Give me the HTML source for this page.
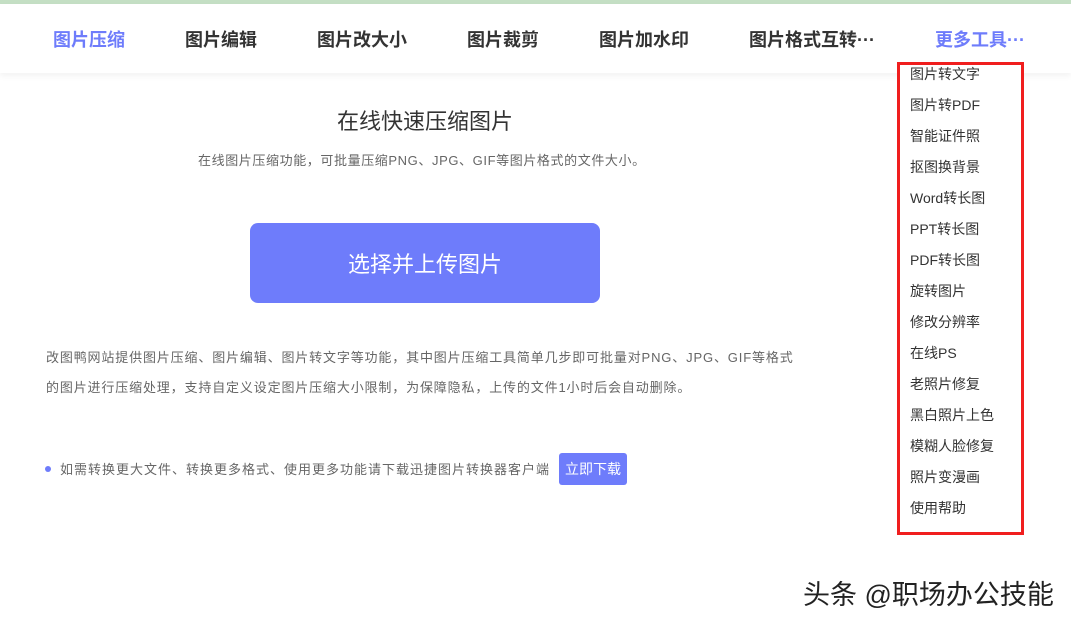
<!DOCTYPE html>
<html><head><meta charset="utf-8"><style>
*{margin:0;padding:0;box-sizing:border-box}
body{width:1071px;height:622px;overflow:hidden;background:#fff;font-family:"Liberation Sans","Noto Sans CJK SC",sans-serif;position:relative}
.top{position:absolute;left:0;top:0;width:1071px;height:4px;background:#c4dfc4}
.nav{position:absolute;left:0;top:4px;width:1071px;height:69px;background:#fff;box-shadow:0 3px 6px rgba(0,0,0,0.05)}
.nav span{position:absolute;top:25px;font-size:18px;font-weight:bold;color:#333;line-height:22px}
.a{position:absolute;white-space:nowrap}
.dd{position:absolute;left:897px;top:62px;width:127px;height:473px;border:3px solid #f01e1e;background:#fff}
.dd div{position:absolute;left:10px;font-size:14px;color:#333;line-height:18px}
</style></head><body>
<div class="top"></div>
<div class="nav">
<span style="left:53px;color:#6e7cfb">图片压缩</span>
<span style="left:185px">图片编辑</span>
<span style="left:317px">图片改大小</span>
<span style="left:467px">图片裁剪</span>
<span style="left:599px">图片加水印</span>
<span style="left:749px">图片格式互转···</span>
<span style="left:935px;color:#6e7cfb">更多工具···</span>
</div>
<div class="a" style="left:337px;top:104px;font-size:22px;color:#333">在线快速压缩图片</div>
<div class="a" style="left:198px;top:150px;font-size:13px;color:#666;letter-spacing:0.6px">在线图片压缩功能，可批量压缩PNG、JPG、GIF等图片格式的文件大小。</div>
<div class="a" style="left:250px;top:223px;width:350px;height:80px;background:#6e7cfb;border-radius:8px;color:#fff;font-size:22px;text-align:center;line-height:84px">选择并上传图片</div>
<div class="a" style="left:46px;top:343px;font-size:13px;color:#666;line-height:30px;letter-spacing:0.85px">改图鸭网站提供图片压缩、图片编辑、图片转文字等功能，其中图片压缩工具简单几步即可批量对PNG、JPG、GIF等格式<br>的图片进行压缩处理，支持自定义设定图片压缩大小限制，为保障隐私，上传的文件1小时后会自动删除。</div>
<div class="a" style="left:45px;top:466px;width:6px;height:6px;border-radius:50%;background:#6e7cfb"></div>
<div class="a" style="left:60px;top:459px;font-size:13px;color:#666;letter-spacing:1px">如需转换更大文件、转换更多格式、使用更多功能请下载迅捷图片转换器客户端</div>
<div class="a" style="left:559px;top:453px;width:68px;height:32px;background:#6e7cfb;border-radius:3px;color:#fff;font-size:14px;text-align:center;line-height:32px">立即下载</div>
<div class="dd">
<div style="top:0px">图片转文字</div>
<div style="top:31px">图片转PDF</div>
<div style="top:62px">智能证件照</div>
<div style="top:93px">抠图换背景</div>
<div style="top:124px">Word转长图</div>
<div style="top:155px">PPT转长图</div>
<div style="top:186px">PDF转长图</div>
<div style="top:217px">旋转图片</div>
<div style="top:248px">修改分辨率</div>
<div style="top:279px">在线PS</div>
<div style="top:310px">老照片修复</div>
<div style="top:341px">黑白照片上色</div>
<div style="top:372px">模糊人脸修复</div>
<div style="top:403px">照片变漫画</div>
<div style="top:434px">使用帮助</div>
</div>
<div class="a" style="left:803px;top:573px;font-size:27px;color:#222;text-shadow:0 0 2px #fff">头条 @职场办公技能</div>
</body></html>
